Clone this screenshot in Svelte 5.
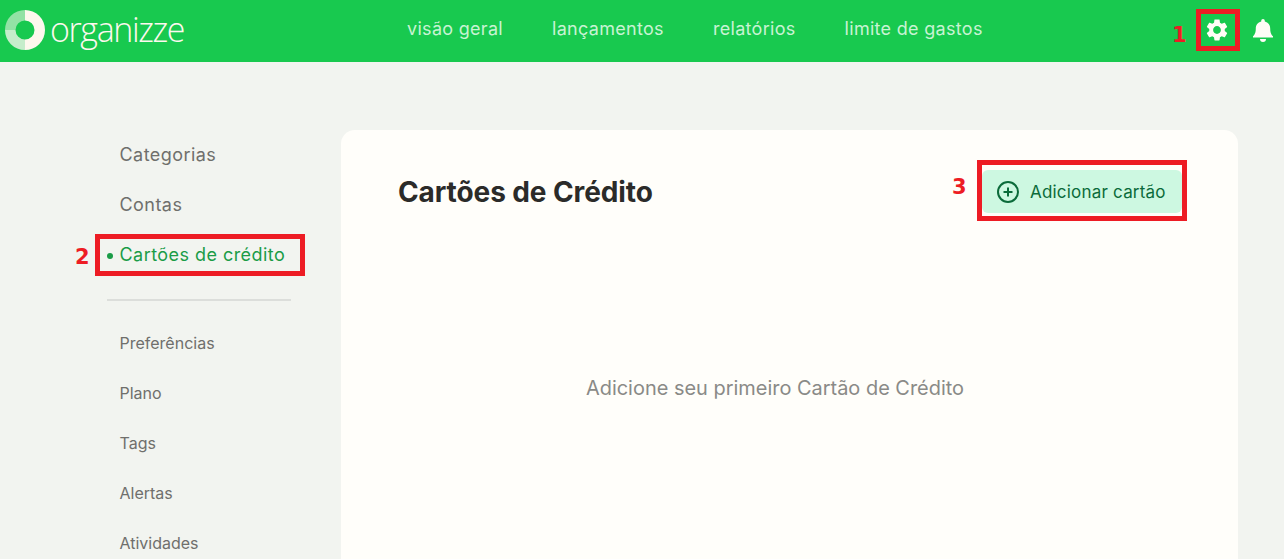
<script>
  const mainNav = ["visão geral", "lançamentos", "relatórios", "limite de gastos"];
  const primaryLinks = ["Categorias", "Contas", "Cartões de crédito"];
  const secondaryLinks = ["Preferências", "Plano", "Tags", "Alertas", "Atividades"];
  const activeLink = "Cartões de crédito";
</script>

<div class="page">
  <header>
    <a class="logo" href="/">
      <svg width="40" height="40" viewBox="0 0 40 40" aria-hidden="true">
        <path d="M20 0a20 20 0 0 1 0 40V29.500a9.500 9.500 0 0 0 0-19z" fill="#fdf8ee" />
        <path d="M20 40A20 20 0 0 1 0 20h10.500a9.500 9.500 0 0 0 9.500 9.500z" fill="#c5edcb" />
        <path d="M0 20A20 20 0 0 1 20 0v10.500a9.500 9.500 0 0 0-9.500 9.500z" fill="#93e2a5" />
      </svg>
      <span>organizze</span>
    </a>
    <nav>
      {#each mainNav as item}
        <a href="/">{item}</a>
      {/each}
    </nav>
    <div class="actions">
      <svg width="26" height="26" viewBox="0 0 24 24" aria-hidden="true">
        <path fill="#fffdf7" d="M19.14 12.94c.04-.3.06-.61.06-.94 0-.32-.02-.64-.07-.94l2.03-1.58c.18-.14.23-.41.12-.61l-1.92-3.32c-.12-.22-.37-.29-.59-.22l-2.39.96c-.5-.38-1.03-.7-1.62-.94l-.36-2.54c-.04-.24-.24-.41-.48-.41h-3.84c-.24 0-.43.17-.47.41l-.36 2.54c-.59.24-1.13.57-1.62.94l-2.39-.96c-.22-.08-.47 0-.59.22L2.74 8.87c-.12.21-.08.47.12.61l2.03 1.58c-.05.3-.09.63-.09.94s.02.64.07.94l-2.03 1.58c-.18.14-.23.41-.12.61l1.92 3.32c.12.22.37.29.59.22l2.39-.96c.5.38 1.03.7 1.62.94l.36 2.54c.05.24.24.41.48.41h3.84c.24 0 .44-.17.47-.41l.36-2.54c.59-.24 1.13-.56 1.62-.94l2.39.96c.22.08.47 0 .59-.22l1.92-3.32c.12-.22.07-.47-.12-.61l-2.01-1.58zM12 15.6c-1.98 0-3.6-1.62-3.6-3.6s1.62-3.6 3.6-3.6 3.6 1.62 3.6 3.6-1.62 3.6-3.6 3.6z" />
      </svg>
      <svg width="22" height="24" viewBox="0 0 22 24" aria-hidden="true">
        <path fill="#fffdf7" d="M11 1a1.800 1.800 0 0 1 1.800 1.800v.6c3.400.8 5.400 3.500 5.400 7 0 4.400 1.100 6 2.800 7.800v1.300H1v-1.300c1.700-1.800 2.800-3.400 2.800-7.800 0-3.500 2-6.200 5.400-7v-.6A1.800 1.800 0 0 1 11 1zM8 21h6a3 3 0 0 1-6 0z" />
      </svg>
    </div>
  </header>

  <main>
    <aside>
      <ul class="primary">
        {#each primaryLinks as link}
          <li class:active={link === activeLink}><a href="/">{link}</a></li>
        {/each}
      </ul>
      <hr />
      <ul class="secondary">
        {#each secondaryLinks as link}
          <li><a href="/">{link}</a></li>
        {/each}
      </ul>
    </aside>

    <section class="card">
      <div class="card-head">
        <h1>Cartões de Crédito</h1>
        <button type="button">
          <svg width="24" height="24" viewBox="0 0 24 24" aria-hidden="true">
            <circle cx="12" cy="12" r="10" fill="none" stroke="#0b6b3a" stroke-width="2" />
            <path d="M12 7.500v9M7.500 12h9" stroke="#0b6b3a" stroke-width="2" />
          </svg>
          Adicionar cartão
        </button>
      </div>
      <p class="empty">Adicione seu primeiro Cartão de Crédito</p>
    </section>
  </main>

  <!-- markers drawn over the screen -->
  <div class="mark box-1"></div>
  <div class="mark box-2"></div>
  <div class="mark box-3"></div>
  <span class="num num-1">1</span>
  <span class="num num-2">2</span>
  <span class="num num-3">3</span>
</div>

<style>
  :global(body) {
    margin: 0;
    background: #f2f4f0;
    overflow: hidden;
  }

  .page {
    position: relative;
    height: 559px;
    overflow: hidden;
    font-family: Inter, "Liberation Sans", sans-serif;
  }

  a {
    text-decoration: none;
    color: inherit;
  }

  header {
    height: 62px;
    background: #18c94f;
    display: flex;
    align-items: center;
    padding: 0 10px 2px 5px;
    box-sizing: border-box;
    color: #c8f3d3;
  }

  .logo {
    display: flex;
    align-items: center;
    gap: 5px;
    width: 402px;
    flex-shrink: 0;
    color: #fdf8ee;
  }

  .logo span {
    font-family: "Open Sans", sans-serif;
    font-size: 34px;
    font-weight: 300;
    letter-spacing: -1.4px;
    line-height: 40px;
    margin-bottom: 2px;
  }

  nav {
    display: flex;
    gap: 49px;
    font-size: 18px;
    letter-spacing: 0.3px;
    flex: 1;
    margin-bottom: 4px;
  }

  .actions {
    display: flex;
    align-items: center;
    gap: 22px;
  }

  main {
    display: flex;
    padding-top: 68px;
  }

  aside {
    width: 341px;
    flex-shrink: 0;
    padding-left: 107px;
    box-sizing: border-box;
  }

  ul {
    list-style: none;
    margin: 0;
    padding: 0;
  }

  li {
    padding-left: 12.500px;
    position: relative;
  }

  .primary li {
    height: 50px;
    line-height: 50px;
    font-size: 18px;
    letter-spacing: 0.45px;
    color: #6f6f6c;
  }

  .primary li.active {
    color: #1a9c47;
  }

  .primary li.active::before {
    content: "";
    position: absolute;
    left: 0;
    top: 23px;
    width: 6px;
    height: 6px;
    border-radius: 50%;
    background: #1a9c47;
  }

  hr {
    width: 184px;
    height: 2px;
    margin: 19px 0 17px;
    border: 0;
    background: #dcdedb;
  }

  .secondary li {
    height: 50px;
    line-height: 50px;
    font-size: 16px;
    color: #6f6f6c;
  }

  .card {
    width: 897px;
    height: 520px;
    background: #fffefa;
    border-radius: 14px;
    padding: 0 56px 0 57px;
    box-sizing: border-box;
  }

  .card-head {
    display: flex;
    align-items: center;
    justify-content: space-between;
    padding-top: 40px;
  }

  h1 {
    margin: 0;
    font-size: 28px;
    font-weight: 700;
    letter-spacing: -0.1px;
    color: #2b2b29;
  }

  button {
    display: flex;
    align-items: center;
    gap: 10px;
    width: 200px;
    height: 43px;
    padding: 0 0 0 14px;
    border: 0;
    border-radius: 6px;
    background: #cdf8e1;
    color: #0b6b3a;
    font-family: inherit;
    font-size: 17px;
    letter-spacing: 0.2px;
  }

  .empty {
    margin: 163px 30px 0 0;
    text-align: center;
    font-size: 19.950px;
    color: #8a8a87;
  }

  .mark {
    position: absolute;
    border: 5px solid #ed1c24;
    box-sizing: border-box;
  }

  .box-1 { left: 1196px; top: 9px; width: 44px; height: 42px; }
  .box-2 { left: 95px; top: 234px; width: 210px; height: 42px; }
  .box-3 { left: 977px; top: 160px; width: 210px; height: 61px; }

  .num {
    position: absolute;
    color: #ed1c24;
    font-family: "DejaVu Sans", sans-serif;
    font-weight: 700;
    font-size: 21px;
    line-height: 24px;
  }

  .num-1 { left: 1172px; top: 23px; }
  .num-2 { left: 75px; top: 245px; }
  .num-3 { left: 952px; top: 175px; }
</style>
